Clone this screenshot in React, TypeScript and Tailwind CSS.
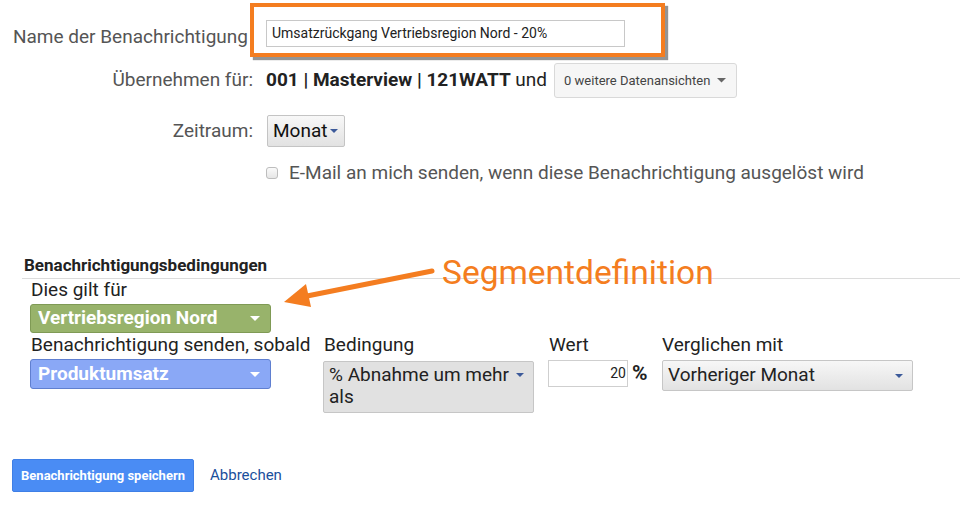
import React from "react";

const Caret = ({ color = "#fff", w = 10 }: { color?: string; w?: number }) => (
  <svg width={w} height={w / 2} viewBox="0 0 10 5">
    <path d="M0 0 L10 0 L5 5 Z" fill={color} />
  </svg>
);

export default function App() {
  return (
    <div
      className="relative w-[960px] h-[506px] bg-white overflow-hidden"
      style={{ fontFamily: "Roboto, 'Liberation Sans', sans-serif" }}
    >
      {/* top form */}
      <div className="flex flex-col pt-[3px]">
        <div className="flex items-center h-[54px]">
          <div className="w-[250px] pr-[2px] text-right text-[19px] text-[#555] leading-none pt-[12px] whitespace-nowrap">
            Name der Benachrichtigung
          </div>
          <div className="w-[415px] h-[54px] border-4 border-[#f47d20] shadow-[3px_3px_1px_rgba(60,60,60,0.55)] pl-[12px] pt-[13px]">
            <div className="w-[359px] h-[27px] border border-[#c8c8c8] flex items-center pl-[5px] text-[14px] text-[#222]">
              Umsatzrückgang Vertriebsregion Nord - 20%
            </div>
          </div>
        </div>

        <div className="flex items-center h-[35px] mt-[6px]">
          <div className="w-[253px] text-right text-[19px] text-[#555]">Übernehmen für:</div>
          <div className="pl-[13px] text-[19px] text-[#222] whitespace-nowrap">
            <span className="font-bold">001 | Masterview | 121WATT</span> und
          </div>
          <div className="ml-[7px] w-[183px] h-[35px] rounded-[3px] border border-[#d9d9d9] bg-[#f6f6f6] flex items-center justify-between pl-[9px] pr-[10px] text-[13px] text-[#444]">
            <span>0 weitere Datenansichten</span>
            <Caret color="#666" w={9} />
          </div>
        </div>

        <div className="flex items-center h-[32px] mt-[17px]">
          <div className="w-[253px] text-right text-[19px] text-[#555]">Zeitraum:</div>
          <div className="ml-[14px] w-[78px] h-[32px] rounded-[2px] border border-[#c4c4c4] bg-gradient-to-b from-[#f8f8f8] to-[#e2e2e2] flex items-center pl-[5px] gap-[3px] text-[19px] text-[#111]">
            <span>Monat</span>
            <Caret color="#3c5a9a" w={8} />
          </div>
        </div>

        <div className="flex items-center h-[22px] mt-[15px] pl-[266px]">
          <div className="w-[12px] h-[12px] rounded-[3px] border border-[#bdbdbd] bg-gradient-to-b from-[#fafafa] to-[#e6e6e6]" />
          <div className="ml-[11px] text-[19px] leading-[22px] text-[#555] whitespace-nowrap">
            E-Mail an mich senden, wenn diese Benachrichtigung ausgelöst wird
          </div>
        </div>
      </div>

      {/* conditions */}
      <div className="mt-[71px] pl-[22px]">
        <div className="pl-[2px] text-[17px] font-bold text-[#222] leading-[20px]">
          Benachrichtigungsbedingungen
        </div>
        <div className="mt-[3px] h-px bg-[#dcdcdc]" />
      </div>

      <div className="pl-[30px] text-[19px] text-[#222]">
        <div className="pl-[1px] leading-[22px]">Dies gilt für</div>
        <div className="mt-[3px] w-[241px] h-[29px] rounded-[3px] border border-[#7f9a55] bg-[#98b36b] flex items-center justify-between pl-[7px] pr-[10px] text-white font-bold">
          <span>Vertriebsregion Nord</span>
          <Caret />
        </div>

        <div className="flex">
          <div className="w-[293px]">
            <div className="pl-[1px] leading-[24px] whitespace-nowrap">Benachrichtigung senden, sobald</div>
            <div className="mt-[2px] w-[241px] h-[30px] rounded-[3px] border border-[#5f7fd0] bg-[#8aa8f6] flex items-center justify-between pl-[7px] pr-[10px] text-white font-bold">
              <span>Produktumsatz</span>
              <Caret />
            </div>
          </div>
          <div className="w-[225px]">
            <div className="pl-[1px] leading-[24px]">Bedingung</div>
            <div className="mt-[4px] w-[211px] h-[52px] rounded-[2px] border border-[#c6c6c6] bg-[#e1e1e1] flex items-start justify-between pl-[5px] pr-[9px] pt-[2px] leading-[22px] text-[#222]">
              <span className="w-[190px]">% Abnahme um mehr als</span>
              <span className="pt-[9px]">
                <Caret color="#3c5a9a" w={8} />
              </span>
            </div>
          </div>
          <div className="w-[114px]">
            <div className="pl-[1px] leading-[24px]">Wert</div>
            <div className="mt-[3px] flex items-center">
              <div className="w-[80px] h-[27px] border border-[#cfcfcf] bg-white flex items-center justify-end pr-[1px] text-[14px] text-[#222]">
                20
              </div>
              <span className="ml-[4px] font-bold text-[21px] leading-none">%</span>
            </div>
          </div>
          <div>
            <div className="leading-[24px] whitespace-nowrap">Verglichen mit</div>
            <div className="mt-[3px] w-[251px] h-[31px] rounded-[2px] border border-[#c6c6c6] bg-gradient-to-b from-[#f7f7f7] to-[#e2e2e2] flex items-center justify-between pl-[5px] pr-[9px] text-[#222]">
              <span>Vorheriger Monat</span>
              <Caret color="#3c5a9a" w={8} />
            </div>
          </div>
        </div>
      </div>

      <div className="flex items-center mt-[46px] pl-[12px]">
        <div className="w-[182px] h-[33px] rounded-[2px] bg-[#4a8cf4] border border-[#3f7fe6] flex items-center justify-center text-white text-[13px] font-bold whitespace-nowrap">
          Benachrichtigung speichern
        </div>
        <div className="ml-[16px] text-[15px] text-[#1a4f9c]">Abbrechen</div>
      </div>

      {/* annotation */}
      <div className="absolute left-[442px] top-[253px] text-[33.5px] leading-[40px] text-[#f47d20] whitespace-nowrap">
        Segmentdefinition
      </div>
      <svg className="absolute left-[280px] top-[262px]" width="160" height="50" viewBox="0 0 160 50">
        <line x1="152" y1="9" x2="22" y2="35" stroke="#f47d20" strokeWidth="5" strokeLinecap="round" />
        <path d="M4 40 L26 22 L31 45 Z" fill="#f47d20" />
      </svg>
    </div>
  );
}
